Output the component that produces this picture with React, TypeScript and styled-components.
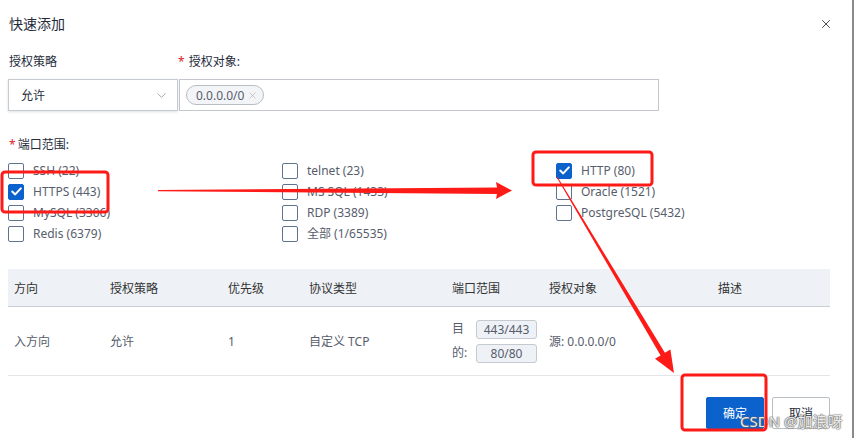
import React from "react";
import styled, { createGlobalStyle } from "styled-components";
import { ChevronDown, X } from "lucide-react";

const GlobalStyle = createGlobalStyle`
  html, body {
    margin: 0;
    padding: 0;
    background: #ffffff;
  }
  body {
    font-family: "Noto Sans", "Noto Sans CJK SC", sans-serif;
    font-size: 12px;
    color: #333;
  }
  * {
    box-sizing: border-box;
  }
`;

const Dialog = styled.div`
  position: relative;
  width: 854px;
  height: 438px;
  border-right: 2px solid #8a8a8a;
  background: #fff;
  overflow: hidden;
`;

const Header = styled.header`
  height: 48px;
  display: flex;
  align-items: center;
  justify-content: space-between;
  padding: 0 19px 0 9px;
`;

const Title = styled.h2`
  margin: 0;
  font-size: 14px;
  font-weight: 400;
  color: #252b3a;
  line-height: 20px;
`;

const CloseBtn = styled.button`
  display: flex;
  padding: 0;
  border: none;
  background: transparent;
  color: #333;
  cursor: pointer;
`;

const Body = styled.div`
  padding: 4px 22px 0 8px;
`;

const FormGrid = styled.div`
  display: grid;
  grid-template-columns: 171px 480px;
  grid-template-rows: 20px 32px;
  row-gap: 7px;
`;

const Label = styled.label<{ $offset?: number }>`
  font-size: 12px;
  line-height: 20px;
  color: #252b3a;
  margin-left: ${(p) => p.$offset ?? 1}px;
  display: flex;
  align-items: center;
`;

const Star = styled.span`
  color: #e0201d;
  margin-right: 4px;
  font-size: 12px;
`;

const Select = styled.div`
  width: 170px;
  height: 32px;
  border: 1px solid #c6cad1;
  box-shadow: 0 1px 3px rgba(0, 0, 0, 0.12);
  display: flex;
  align-items: center;
  justify-content: space-between;
  padding: 0 8px 0 12px;
  color: #252b3a;
  background: #fff;
`;

const TagInput = styled.div`
  height: 32px;
  border: 1px solid #c3c7cd;
  display: flex;
  align-items: center;
  padding: 0 6px;
`;

const Tag = styled.span`
  display: inline-flex;
  align-items: center;
  gap: 3px;
  height: 20px;
  padding: 0 5px 0 9px;
  border: 1px solid #b9bdc4;
  border-radius: 10px;
  background: #f3f4f7;
  color: #575d6c;
  font-size: 12px;
`;

const PortLabel = styled(Label)`
  margin-top: 24px;
  margin-left: 1px;
`;

const CheckGrid = styled.div`
  margin-top: 5px;
  display: grid;
  grid-template-columns: repeat(3, 274px);
  grid-template-rows: repeat(4, 21px);
  grid-auto-flow: column;
`;

const CheckItem = styled.label`
  display: flex;
  align-items: center;
  gap: 9px;
  color: #575d6c;
  font-size: 12px;
  line-height: 16px;
`;

const Box = styled.span<{ $checked?: boolean }>`
  width: 16px;
  height: 16px;
  border-radius: 2px;
  border: 1px solid ${(p) => (p.$checked ? "#0b62cc" : "#5d7390")};
  background: ${(p) => (p.$checked ? "#0b62cc" : "#fff")};
  display: flex;
  align-items: center;
  justify-content: center;
  flex-shrink: 0;
`;

const TableWrap = styled.div`
  margin-top: 25px;
`;

const cols = "96px 118px 81px 143px 97px 169px 118px";

const HeadRow = styled.div`
  display: grid;
  grid-template-columns: ${cols};
  height: 38px;
  background: #eef1f6;
  border-bottom: 1px solid #c8ccd3;
  align-items: center;
`;

const HeadCell = styled.div`
  padding-left: 6px;
  color: #333;
  font-size: 12px;
`;

const DataRow = styled.div`
  display: grid;
  grid-template-columns: ${cols};
  height: 69px;
  border-bottom: 1px solid #e3e5e9;
  align-items: center;
`;

const Cell = styled.div`
  padding-left: 6px;
  color: #575d6c;
  font-size: 12px;
`;

const PortCell = styled(Cell)`
  display: flex;
  align-items: center;
  gap: 7px;
`;

const PortTag = styled.span`
  width: 17px;
  line-height: 24px;
  word-break: break-all;
`;

const PortBoxes = styled.div`
  display: flex;
  flex-direction: column;
  gap: 5px;
`;

const PortBox = styled.span`
  width: 61px;
  height: 19px;
  border: 1px solid #c5c9d0;
  border-radius: 3px;
  background: #eef1f6;
  display: flex;
  align-items: center;
  justify-content: center;
  color: #575d6c;
  font-size: 12px;
`;

const Footer = styled.div`
  margin-top: 21px;
  display: flex;
  justify-content: flex-end;
  gap: 8px;
`;

const Button = styled.button<{ $primary?: boolean }>`
  width: 58px;
  height: 32px;
  font-family: inherit;
  font-size: 12px;
  border-radius: 2px;
  cursor: pointer;
  border: 1px solid ${(p) => (p.$primary ? "#0b62cc" : "#b9bdc4")};
  background: ${(p) => (p.$primary ? "#0b62cc" : "#fff")};
  color: ${(p) => (p.$primary ? "#fff" : "#252b3a")};
`;

const Watermark = styled.div`
  position: absolute;
  left: 740px;
  top: 410px;
  font-size: 15px;
  line-height: 22px;
  color: rgba(255, 255, 255, 0.9);
  text-shadow: 0 0 1px #5a5a5a, 0 0 1px #5a5a5a, 0 0 2px #777;
  pointer-events: none;
  white-space: nowrap;
`;

const Overlay = styled.svg`
  position: absolute;
  left: 0;
  top: 0;
  pointer-events: none;
`;

const Check = () => (
  <svg width="11" height="9" viewBox="0 0 11 9">
    <path d="M1.2 4.6 L4.2 7.4 L9.8 1.4" fill="none" stroke="#fff" strokeWidth="2" strokeLinecap="round" strokeLinejoin="round" />
  </svg>
);

const ports = [
  { name: "SSH (22)" },
  { name: "HTTPS (443)", checked: true },
  { name: "MySQL (3306)" },
  { name: "Redis (6379)" },
  { name: "telnet (23)" },
  { name: "MS SQL (1433)" },
  { name: "RDP (3389)" },
  { name: "全部 (1/65535)" },
  { name: "HTTP (80)", checked: true },
  { name: "Oracle (1521)" },
  { name: "PostgreSQL (5432)" },
];

const headers = ["方向", "授权策略", "优先级", "协议类型", "端口范围", "授权对象", "描述"];

const RED = "#fe1b17";

const App = () => {
  return (
    <>
      <GlobalStyle />
      <Dialog>
        <Header>
          <Title>快速添加</Title>
          <CloseBtn>
            <X size={14} strokeWidth={1.5} />
          </CloseBtn>
        </Header>
        <Body>
          <FormGrid>
            <Label>授权策略</Label>
            <Label $offset={-1}>
              <Star>*</Star>授权对象:
            </Label>
            <Select>
              <span>允许</span>
              <ChevronDown size={15} strokeWidth={1.2} color="#8a8e96" />
            </Select>
            <TagInput>
              <Tag>
                0.0.0.0/0
                <X size={11} strokeWidth={1.2} color="#a3a7ae" />
              </Tag>
            </TagInput>
          </FormGrid>

          <PortLabel>
            <Star style={{ marginRight: 2 }}>*</Star>端口范围:
          </PortLabel>
          <CheckGrid>
            {ports.map((p) => (
              <CheckItem key={p.name}>
                <Box $checked={p.checked}>{p.checked && <Check />}</Box>
                {p.name}
              </CheckItem>
            ))}
          </CheckGrid>

          <TableWrap>
            <HeadRow>
              {headers.map((h) => (
                <HeadCell key={h}>{h}</HeadCell>
              ))}
            </HeadRow>
            <DataRow>
              <Cell>入方向</Cell>
              <Cell>允许</Cell>
              <Cell>1</Cell>
              <Cell>自定义 TCP</Cell>
              <PortCell>
                <PortTag>目的:</PortTag>
                <PortBoxes>
                  <PortBox>443/443</PortBox>
                  <PortBox>80/80</PortBox>
                </PortBoxes>
              </PortCell>
              <Cell>源: 0.0.0.0/0</Cell>
              <Cell />
            </DataRow>
          </TableWrap>

          <Footer>
            <Button $primary>确定</Button>
            <Button>取消</Button>
          </Footer>
        </Body>

        <Watermark>CSDN @加浪呀</Watermark>

        <Overlay width="854" height="438" viewBox="0 0 854 438">
          <g fill="none" stroke={RED} strokeWidth="3">
            <rect x="2" y="172" width="106" height="40" rx="3" />
            <rect x="533" y="152" width="119" height="33" rx="3" />
            <rect x="682" y="375" width="84" height="55" rx="3" />
          </g>
          <g fill={RED}>
            <polygon points="158,190 497,187.5 496,182 512,190.5 496,199 497,194 158,191.3" />
            <polygon points="556.6,177.3 557.4,176.7 664.9,352.8 670.4,349.5 674,373 655,358.7 660.6,355.4" />
          </g>
        </Overlay>
      </Dialog>
    </>
  );
};

export default App;
